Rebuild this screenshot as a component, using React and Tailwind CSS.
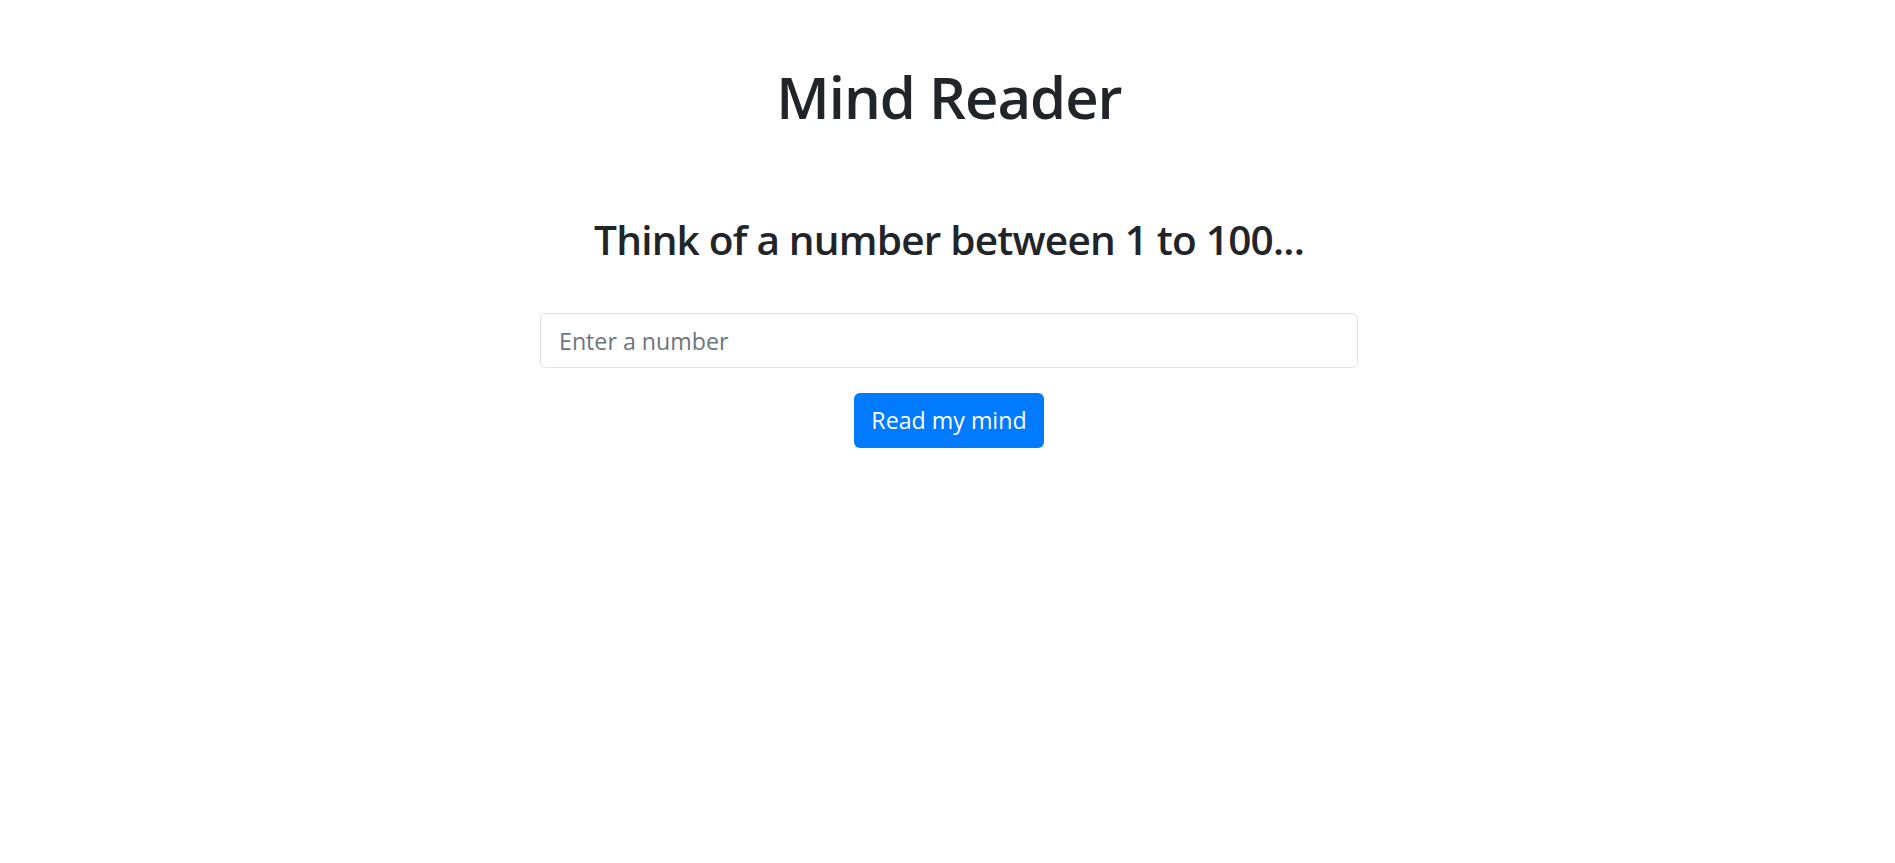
import React, { useState } from 'react';

const App = () => {
    const [guess, setGuess] = useState('');

    return (
        <div className="min-h-screen bg-white text-[#212529]" style={{ fontFamily: '"Open Sans", "Noto Sans", sans-serif' }}>
            <div className="flex flex-col items-center pt-[62px] pl-[3px]">
                <h1 className="text-[58px] leading-[1.2] font-semibold tracking-[-1px]">Mind Reader</h1>
                <h3 className="mt-[84px] text-[40.6px] leading-[1.2] font-semibold tracking-[-0.8px]">Think of a number between 1 to 100...</h3>
                <input
                    type="number"
                    placeholder="Enter a number"
                    value={guess}
                    onChange={(e) => setGuess(e.target.value)}
                    className="mt-[49px] w-[818px] h-[55px] px-[18px] text-[23.2px] text-[#495057] placeholder:text-[#6c757d] border border-[#dee2e6] rounded-[6px] outline-none"
                />
                <button className="mt-[25px] h-[55px] px-[17px] bg-[#007bff] text-white text-[23.2px] rounded-[6px]">
                    Read my mind
                </button>
            </div>
        </div>
    );
};

export default App;
